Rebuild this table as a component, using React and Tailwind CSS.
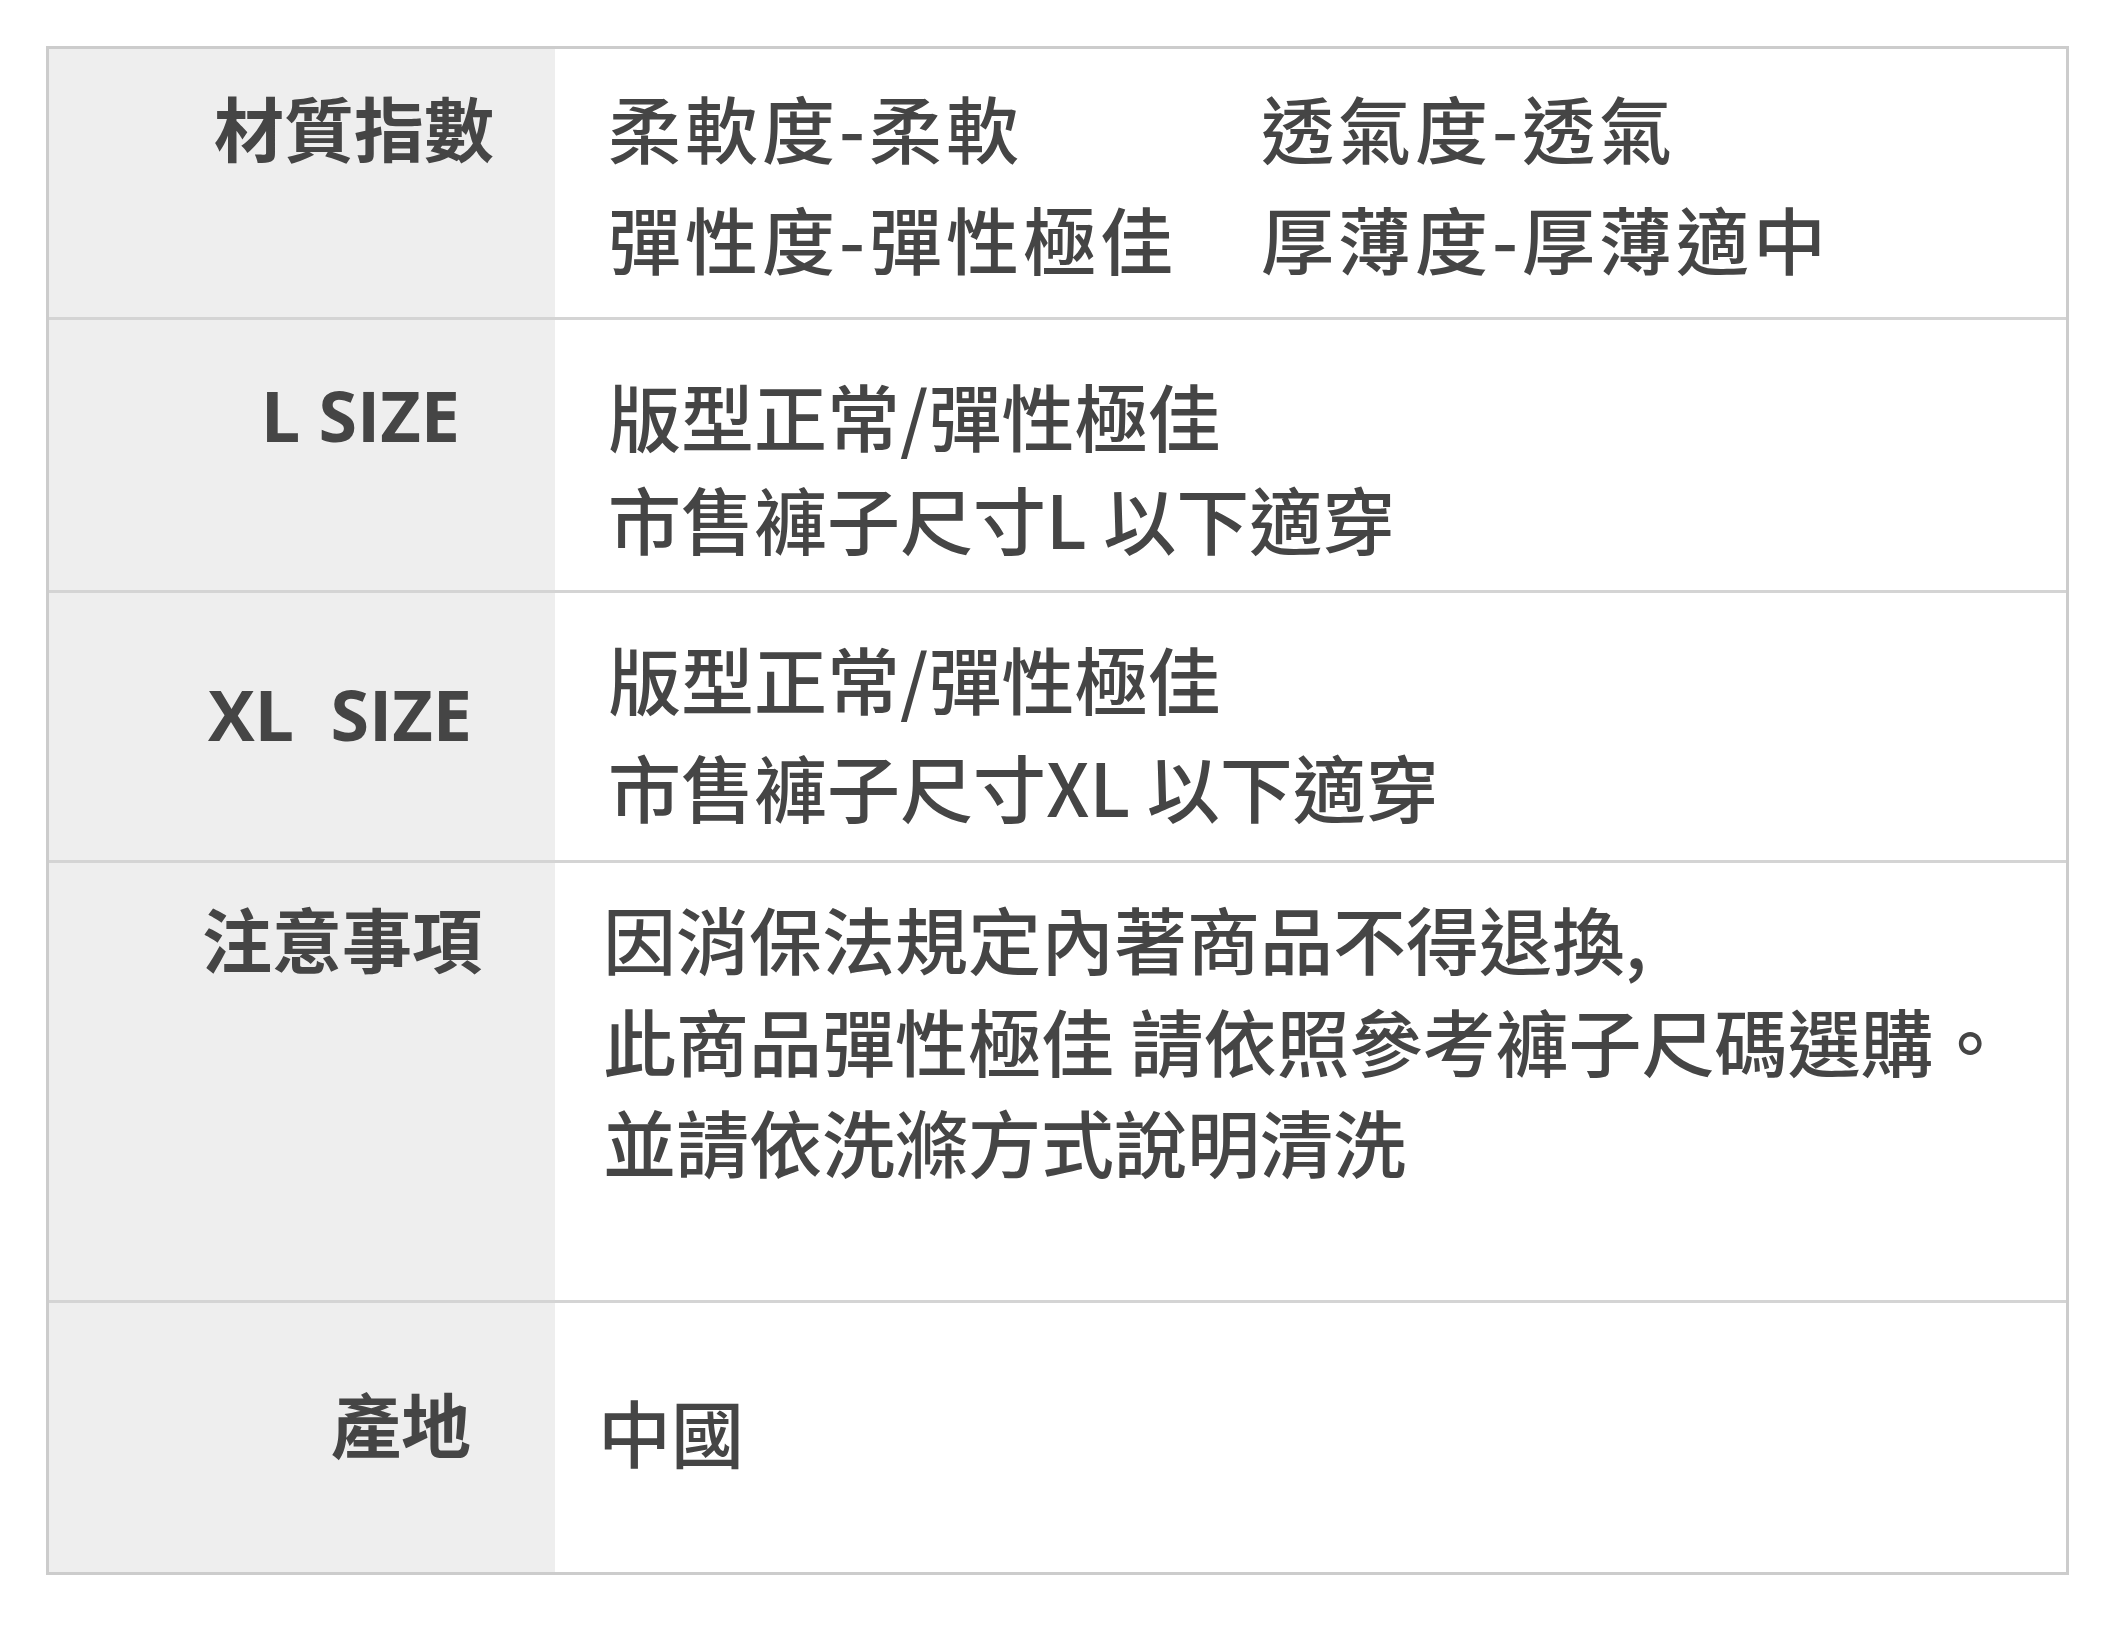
export default function App() {
  const label =
    "w-[506px] shrink-0 bg-[#eeeeee] text-right text-[70px] font-bold leading-[100px] font-['Open_Sans','Noto_Sans_CJK_TC',sans-serif]"
  const value = "flex-1 text-[73px] font-medium font-['Noto_Sans_CJK_TC','Open_Sans',sans-serif]"

  return (
    <div className="min-h-screen bg-white pt-[46px] pl-[46px] text-[#454545]">
      <div className="w-[2023px] border-[3px] border-[#cccccc]">
        {/* 材質指數 */}
        <div className="flex h-[268px]">
          <div className={`${label} pt-[31px] pr-[61px]`}>材質指數</div>
          <div className={`${value} grid grid-cols-[653px_auto] content-start pt-[22px] pl-[53px] leading-[111px] tracking-[4px]`}>
            <span>柔軟度-柔軟</span>
            <span>透氣度-透氣</span>
            <span>彈性度-彈性極佳</span>
            <span>厚薄度-厚薄適中</span>
          </div>
        </div>

        {/* L SIZE */}
        <div className="flex h-[273px] border-t-[3px] border-[#d4d4d4]">
          <div className={`${label} pt-[45px] pr-[95px]`}>L SIZE</div>
          <div className={`${value} pt-[43px] pl-[53px] leading-[103px]`}>
            <p>版型正常/彈性極佳</p>
            <p>市售褲子尺寸L 以下適穿</p>
          </div>
        </div>

        {/* XL SIZE */}
        <div className="flex h-[270px] border-t-[3px] border-[#d4d4d4]">
          <div className={`${label} pt-[71px] pr-[83px] whitespace-pre`}>{"XL  SIZE"}</div>
          <div className={`${value} pt-[30px] pl-[53px] leading-[108px]`}>
            <p>版型正常/彈性極佳</p>
            <p>市售褲子尺寸XL 以下適穿</p>
          </div>
        </div>

        {/* 注意事項 */}
        <div className="flex h-[440px] border-t-[3px] border-[#d4d4d4]">
          <div className={`${label} pt-[28px] pr-[73px]`}>注意事項</div>
          <div className={`${value} pt-[24px] pl-[48px] leading-[101.5px]`}>
            <p>因消保法規定內著商品不得退換,</p>
            <p>此商品彈性極佳 請依照參考褲子尺碼選購。</p>
            <p>並請依洗滌方式說明清洗</p>
          </div>
        </div>

        {/* 產地 */}
        <div className="flex h-[272px] border-t-[3px] border-[#d4d4d4]">
          <div className={`${label} pt-[73px] pr-[84px]`}>產地</div>
          <div className={`${value} pt-[77px] pl-[43px] leading-[100px]`}>
            <p>中國</p>
          </div>
        </div>
      </div>
    </div>
  )
}
